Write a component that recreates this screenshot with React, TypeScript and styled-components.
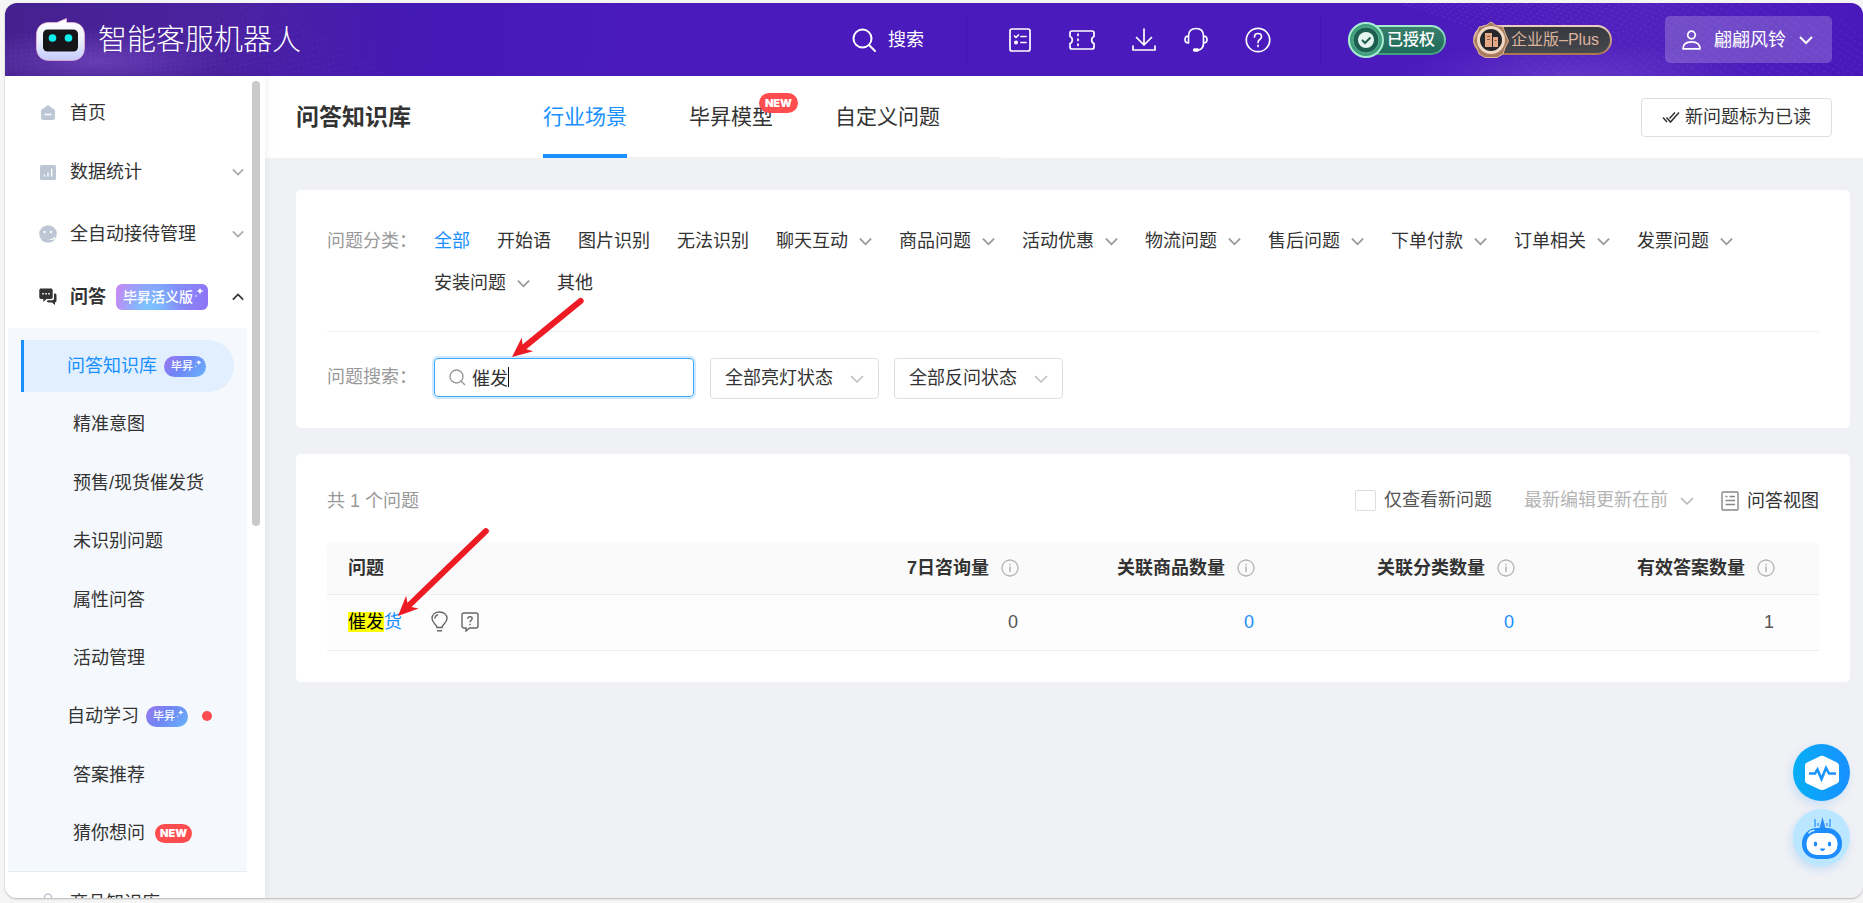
import React, { useState } from 'react';
import styled, { createGlobalStyle, css } from 'styled-components';

const GlobalStyle = createGlobalStyle`
  *, *::before, *::after { box-sizing: border-box; }
  body {
    margin: 0;
    background: #f5f5f5;
    color: #333;
    font-family: "Liberation Sans", "Noto Sans CJK SC", sans-serif;
    font-size: 18px;
    line-height: 26px;
    font-weight: 400;
  }
  button, input, select { font: inherit; color: inherit; margin: 0; }
  button { background: none; border: 0; padding: 0; cursor: pointer; }
  a { color: inherit; text-decoration: none; }
  ul { list-style: none; margin: 0; padding: 0; }
  h1 { margin: 0; }
  svg { display: block; flex: none; }
`;

/* ---------- frame ---------- */

const Frame = styled.div`
  display: flex;
  flex-direction: column;
  height: calc(100vh - 8px);
  margin: 3px 0 5px 5px;
  border-radius: 12px;
  overflow: hidden;
  background: #f0f1f5;
  box-shadow: 0 1px 2px rgba(0, 0, 0, 0.25);
`;

const Body = styled.div`
  display: flex;
  flex: 1;
  min-height: 0;
`;

/* ---------- top bar ---------- */

const TopBar = styled.header`
  position: relative;
  display: flex;
  align-items: center;
  flex: none;
  height: 73px;
  padding: 0 31px;
  color: #fff;
  background: linear-gradient(97deg, #45218f 0%, #4a22a0 12%, #4419b4 22%, #4a1abd 34%, #4a1abd 76%, #5122bd 88%, #4a17bb 100%);
`;

const Waves = styled.svg`
  position: absolute;
  inset: 0;
  width: 100%;
  height: 100%;
`;

const Brand = styled.a`
  position: relative;
  display: flex;
  align-items: center;
  gap: 13px;
  font-size: 29px;
  line-height: 40px;
  font-weight: 300;
  flex: 1;
`;

const TopTools = styled.div`
  position: relative;
  display: flex;
  align-items: center;
`;

const SearchButton = styled.button`
  display: flex;
  align-items: center;
  gap: 12px;
  padding-right: 42px;
`;

const ToolSet = styled.div`
  display: flex;
  align-items: center;
  gap: 36px;
  height: 52px;
  padding: 0 49px 0 40px;
  border: solid rgba(40, 10, 130, 0.25);
  border-width: 0 1px;
`;

const ToolPair = styled.div`
  display: flex;
  gap: 26px;
`;

const ToolButton = styled.button`
  display: flex;
  align-items: center;
  justify-content: center;
  width: 26px;
`;

const Medal = styled.a<{ $kind: 'auth' | 'plan' }>`
  position: relative;
  display: flex;
  align-items: center;
  height: 30px;
  margin-left: 27px;
  font-size: 16px;
  line-height: 22px;
  border-radius: 15px;
  border: 2px solid transparent;
  white-space: nowrap;
  ${({ $kind }) =>
    $kind === 'auth'
      ? css`
          width: 98px;
          padding-left: 37px;
          font-weight: 500;
          background: linear-gradient(#3a7f6c, #1f6a5c) padding-box, linear-gradient(#a5ecd0, #3f9c7c) border-box;
        `
      : css`
          width: 139px;
          padding-left: 36px;
          color: #dcb49c;
          background: linear-gradient(#38383f, #47474e) padding-box, linear-gradient(#ecd0c0, #a87350) border-box;
        `}
`;

const MedalIcon = styled.svg`
  position: absolute;
  left: -2px;
  top: -6px;
`;

const UserButton = styled.button`
  display: flex;
  align-items: center;
  gap: 13px;
  height: 47px;
  margin-left: 53px;
  padding: 0 19px 0 17px;
  border-radius: 5px;
  background: rgba(255, 255, 255, 0.2);
`;

/* ---------- side bar ---------- */

const Side = styled.aside`
  position: relative;
  z-index: 1;
  flex: none;
  width: 260px;
  overflow: hidden;
  background: #fff;
  box-shadow: 0 0 10px rgba(0, 0, 0, 0.08);
`;

const ScrollThumb = styled.div`
  position: absolute;
  top: 5px;
  right: 5px;
  width: 8px;
  height: 445px;
  border-radius: 4px;
  background: #c9c9c9;
`;

const MenuList = styled.ul`
  padding: 8px 18px 0 3px;
`;

const MenuLink = styled.a<{ $short?: boolean; $open?: boolean }>`
  display: flex;
  align-items: center;
  height: ${({ $short, $open }) => ($short ? 57 : $open ? 63 : 62)}px;
  padding: 0 3px 0 31px;
  font-weight: ${({ $open }) => ($open ? 700 : 400)};
  color: #333;
`;

const MenuIcon = styled.span`
  display: flex;
  justify-content: center;
  width: 18px;
  margin-right: 13px;
`;

const Grow = styled.span`
  flex: 1;
`;

const EditionBadge = styled.span`
  position: relative;
  height: 26px;
  margin-left: 10px;
  padding: 0 15px 0 7px;
  border-radius: 6px;
  color: #fff;
  font-size: 14px;
  line-height: 26px;
  font-weight: 500;
  background: radial-gradient(circle at 35% 90%, #7cc6ff 0%, rgba(124, 198, 255, 0) 50%),
    linear-gradient(100deg, #c58df5 0%, #7f9bfb 50%, #8f73f6 100%);
`;

const ModelBadge = styled.span`
  position: relative;
  width: 42px;
  height: 21px;
  margin-left: 7px;
  padding-left: 7px;
  border-radius: 11px;
  color: #fff;
  font-size: 11px;
  line-height: 21px;
  font-weight: 500;
  background: linear-gradient(130deg, #9f76ee 0%, #6f86f5 45%, #68b4fb 100%);
`;

const Spark = styled.svg`
  position: absolute;
  top: 4px;
  right: 4px;
`;

const NewBadge = styled.span<{ $over?: boolean }>`
  height: ${({ $over }) => ($over ? 20 : 19)}px;
  padding: 0 ${({ $over }) => ($over ? 6 : 5)}px;
  border-radius: 10px;
  color: #fff;
  background: #ff4d4f;
  font-family: Inter, sans-serif;
  font-size: 11px;
  line-height: ${({ $over }) => ($over ? 20 : 19)}px;
  font-weight: 900;
  ${({ $over }) =>
    $over
      ? css`
          position: absolute;
          top: 17px;
          right: -25px;
        `
      : css`
          margin-left: 10px;
        `}
`;

const Dot = styled.span`
  width: 10px;
  height: 10px;
  margin-left: 14px;
  border-radius: 50%;
  background: #ff4d4f;
`;

const SubMenu = styled.ul`
  display: flex;
  flex-direction: column;
  justify-content: space-between;
  height: 544px;
  padding: 12px 13px;
  background: #f5f9fd;
  border-bottom: 1px solid #e3edf6;
`;

const SubLink = styled.a<{ $active?: boolean; $badged?: boolean }>`
  display: flex;
  align-items: center;
  height: 52px;
  padding-left: ${({ $badged }) => ($badged ? 43 : 49)}px;
  border-left: 3px solid transparent;
  ${({ $active }) =>
    $active &&
    css`
      color: #1890ff;
      border-left-color: #1890ff;
      border-radius: 0 26px 26px 0;
      background: #e1effe;
    `}
`;

/* ---------- main ---------- */

const Main = styled.main`
  position: relative;
  flex: 1;
  min-width: 0;
`;

const PageHead = styled.div`
  display: flex;
  align-items: center;
  height: 82px;
  padding: 0 31px;
  background: #fff;
`;

const Title = styled.h1`
  width: 247px;
  font-size: 23px;
  line-height: 32px;
  font-weight: 700;
`;

const Tabs = styled.nav`
  display: flex;
  align-self: stretch;
  gap: 62px;
  padding-right: 61px;
  border-bottom: 1px solid #f0f0f2;
`;

const Tab = styled.a<{ $active?: boolean }>`
  position: relative;
  margin-bottom: -1px;
  font-size: 21px;
  line-height: 82px;
  ${({ $active }) =>
    $active &&
    css`
      color: #1890ff;
      box-shadow: inset 0 -4px #1890ff;
    `}
`;

const OutlineButton = styled.button`
  display: flex;
  align-items: center;
  gap: 5px;
  height: 39px;
  margin-left: auto;
  padding: 0 20px;
  border: 1px solid #dcdee0;
  border-radius: 4px;
`;

const Content = styled.div`
  display: flex;
  flex-direction: column;
  gap: 26px;
  padding: 32px 13px 0 31px;
`;

const Card = styled.section<{ $top: number; $bottom: number }>`
  position: relative;
  padding: ${({ $top, $bottom }) => `${$top}px 31px ${$bottom}px`};
  border-radius: 5px;
  background: #fff;
`;

const FilterRow = styled.div<{ $divided?: boolean }>`
  display: flex;
  align-items: flex-start;
  ${({ $divided }) =>
    $divided &&
    css`
      padding-bottom: 27px;
      border-bottom: 1px solid #f0f2f4;
      margin-bottom: 26px;
    `}
`;

const FilterLabel = styled.label<{ $line: number }>`
  flex: none;
  width: 107px;
  line-height: ${({ $line }) => $line}px;
  color: #999;
`;

const Categories = styled.ul`
  display: flex;
  flex-wrap: wrap;
  column-gap: 27px;
`;

const Category = styled.button<{ $active?: boolean }>`
  display: flex;
  align-items: center;
  gap: 11px;
  height: 42px;
  color: ${({ $active }) => ($active ? '#1890ff' : '#333')};
`;

const SearchField = styled.div`
  position: relative;
  display: flex;
  align-items: center;
  gap: 6px;
  width: 260px;
  height: 39px;
  margin-right: 16px;
  padding-left: 14px;
  border: 1px solid #40a9ff;
  border-radius: 4px;
  box-shadow: 0 0 0 2px rgba(24, 144, 255, 0.2);
`;

const SearchInput = styled.input`
  flex: 1;
  min-width: 0;
  height: 100%;
  padding: 0 0 2px;
  border: 0;
  outline: 0;
  background: none;
`;

const Caret = styled.span`
  position: absolute;
  top: 8px;
  left: 73px;
  width: 1px;
  height: 20px;
  background: #111;
`;

const SelectBox = styled.span<{ $plain?: boolean }>`
  position: relative;
  display: inline-flex;
  align-items: center;
  width: ${({ $plain }) => ($plain ? 171 : 169)}px;
  color: ${({ $plain }) => ($plain ? '#b5b5b5' : '#333')};
  ${({ $plain }) =>
    !$plain &&
    css`
      height: 41px;
      margin-right: 15px;
      border: 1px solid #dcdee0;
      border-radius: 4px;
    `}

  select {
    appearance: none;
    width: 100%;
    height: 100%;
    padding: ${({ $plain }) => ($plain ? '0 0 2px' : '0 14px 2px')};
    border: 0;
    outline: 0;
    background: none;
  }

  svg {
    position: absolute;
    right: ${({ $plain }) => ($plain ? 1 : 14)}px;
    pointer-events: none;
  }
`;

const TableTools = styled.div`
  display: flex;
  align-items: center;
  height: 42px;
  margin-bottom: 20px;
`;

const Total = styled.span`
  flex: 1;
  color: #999;
`;

const CheckLabel = styled.label`
  display: flex;
  align-items: center;
  gap: 8px;
  margin-right: 32px;
  padding-bottom: 2px;
  color: #555;

  input {
    appearance: none;
    width: 21px;
    height: 21px;
    border: 1px solid #dcdee0;
    border-radius: 2px;
    background: #fff;
  }
`;

const ViewButton = styled.button`
  display: flex;
  align-items: center;
  gap: 8px;
  margin-left: 26px;
`;

const Table = styled.table`
  width: 100%;
  table-layout: fixed;
  border-collapse: separate;
  border-spacing: 0;
`;

const Th = styled.th<{ $width?: number; $last?: boolean }>`
  width: ${({ $width }) => ($width ? `${$width}px` : 'auto')};
  height: 53px;
  padding: 0 ${({ $last }) => ($last ? 44 : 21)}px 0 21px;
  text-align: left;
  font-weight: 700;
  background: #fafafa;
  border-bottom: 1px solid #ebedef;
  &:first-child { border-top-left-radius: 5px; }
  &:last-child { border-top-right-radius: 5px; }
`;

const HeadCell = styled.span`
  display: flex;
  align-items: center;
  justify-content: flex-end;
  gap: 12px;
  white-space: nowrap;
`;

const Td = styled.td<{ $num?: boolean; $last?: boolean }>`
  height: 56px;
  padding: 0 ${({ $last }) => ($last ? 45 : 22)}px 2px 21px;
  text-align: ${({ $num }) => ($num ? 'right' : 'left')};
  color: #555;
  background: #fdfdfd;
  border-bottom: 1px solid #ebedef;
`;

const Link = styled.a`
  color: #1890ff;
`;

const QuestionCell = styled.div`
  display: flex;
  align-items: center;

  mark {
    display: inline-block;
    line-height: 20px;
    background: #ff0;
    color: #000;
  }
  button { margin-left: 13px; }
  a + button { margin-left: 29px; }
`;

const FloatButtons = styled.div`
  position: absolute;
  right: 13px;
  bottom: 32px;
  display: flex;
  flex-direction: column;
  gap: 8px;
`;

const FloatButton = styled.button<{ $soft?: boolean }>`
  display: flex;
  align-items: center;
  justify-content: center;
  width: 57px;
  height: 57px;
  border-radius: 50%;
  background: ${({ $soft }) => ($soft ? '#bae7ff' : 'linear-gradient(90deg, #06aef5, #1890ff)')};
  box-shadow: -2px 4px 10px rgba(24, 144, 255, 0.18);
`;

const Pointer = styled.svg<{ $left: number; $top: number }>`
  position: absolute;
  left: ${({ $left }) => $left}px;
  top: ${({ $top }) => $top}px;
  pointer-events: none;
`;

/* ---------- drawings ---------- */

const Chevron = ({ size = 14, color = '#aaa', up = false, weight = 2 }: { size?: number; color?: string; up?: boolean; weight?: number }) => (
  <svg width={size} height={size} viewBox="0 0 14 14" fill="none" stroke={color} strokeWidth={weight}>
    <path d={up ? 'M1 10l6-6 6 6' : 'M1 4l6 6 6-6'} />
  </svg>
);

const InfoIcon = () => (
  <svg width="18" height="18" viewBox="0 0 18 18" fill="none" stroke="#b3b3b3" strokeWidth="1.3">
    <circle cx="9" cy="9" r="8" />
    <path d="M9 7.6v5.4M9 4.8v1.4" strokeWidth="1.5" />
  </svg>
);

const SparkIcon = ({ size = 10 }: { size?: number }) => (
  <Spark width={size} height={size} viewBox="0 0 10 10" fill="#fff">
    <path d="M6 0l1 2 2.500 1L7 4 6 6.500 5 4 2.500 3 5 2z" />
    <circle cx="2" cy="8" r="1" opacity=".6" />
  </Spark>
);

const LogoIcon = () => (
  <svg width="49" height="43" viewBox="0 0 49 43">
    <defs>
      <linearGradient id="logo" x1="0" y1="0" x2="0" y2="1">
        <stop offset="0" stopColor="#fff" />
        <stop offset=".5" stopColor="#eef0ff" />
        <stop offset="1" stopColor="#c3cbff" />
      </linearGradient>
    </defs>
    <path d="M13 4.500h8L30.500.5v4H36c8 0 12.500 5 12.500 12.500V29c0 9-5 13.500-13 13.500h-22C5.500 42.500.5 38 .5 29V17C.5 9.500 5 4.500 13 4.500z" fill="url(#logo)" stroke="#f3b9cf" strokeWidth=".7" />
    <rect x="7" y="11.500" width="35" height="22" rx="4.500" fill="#161619" />
    <circle cx="16.500" cy="20" r="3.800" fill="#0ff0f0" />
    <circle cx="32.500" cy="20" r="3.800" fill="#0ff0f0" />
  </svg>
);

const range = (n: number) => Array.from({ length: n }, (_, i) => i);

const HeaderWaves = () => (
  <Waves aria-hidden="true">
    <defs>
      <radialGradient id="glow">
        <stop offset="0" stopColor="#9a6ae0" stopOpacity=".38" />
        <stop offset="1" stopColor="#9a6ae0" stopOpacity="0" />
      </radialGradient>
    </defs>
    <ellipse cx="90" cy="58" rx="130" ry="32" fill="url(#glow)" />
    <g fill="none" stroke="#a884ee" strokeOpacity=".13" strokeDasharray="2 3">
      {range(16).map((i) => (
        <path key={i} d={`M0 ${34 + i * 5}C90 ${20 + i * 5} 150 ${56 + i * 4} ${260 + i * 8} ${-6 + i * 5}`} />
      ))}
    </g>
    <svg x="75%" width="480" height="73">
      <ellipse cx="170" cy="73" rx="170" ry="34" fill="url(#glow)" opacity=".7" />
      <g fill="none" stroke="#a884ee" strokeOpacity=".18" strokeDasharray="3 3">
        {range(34).map((i) => (
          <path key={i} d={`M${-80 + i * 15} -8C${60 + i * 12} ${-2 + i} ${100 + i * 11} 40 ${150 + i * 12} 82`} />
        ))}
      </g>
    </svg>
  </Waves>
);

const line = { fill: 'none', stroke: '#fff', strokeWidth: 1.7, strokeLinecap: 'round', strokeLinejoin: 'round' } as const;

const TaskTool = () => (
  <ToolButton aria-label="任务清单">
    <svg width="24" height="26" viewBox="0 0 24 26" {...line}>
      <rect x="2" y="2" width="20" height="22" rx="2" />
      <path d="M6.500 9l1.500 1.500L10.500 8M13 9.500h5M13 15.500h5" />
      <circle cx="8" cy="15.500" r="1.200" />
    </svg>
  </ToolButton>
);

const TicketTool = () => (
  <ToolButton aria-label="卡券">
    <svg width="26" height="22" viewBox="0 0 26 22" {...line}>
      <path d="M3 2h20c1 0 2 1 2 2v3.500c-1.500.5-2.300 2-2.300 3.500s.8 3 2.300 3.500V18c0 1-1 2-2 2H3c-1 0-2-1-2-2v-3.500c1.500-.5 2.300-2 2.300-3.500S2.500 8 1 7.500V4c0-1 1-2 2-2z" />
      <path d="M9 5v13" strokeDasharray="1.500 3.500" />
    </svg>
  </ToolButton>
);

const DownloadTool = () => (
  <ToolButton aria-label="下载">
    <svg width="24" height="25" viewBox="0 0 24 25" {...line}>
      <path d="M12 2v16M4.500 10.500L12 18l7.500-7.500M1 19v4h22v-4" />
    </svg>
  </ToolButton>
);

const HeadsetTool = () => (
  <ToolButton aria-label="客服">
    <svg width="24" height="25" viewBox="0 0 24 25" {...line}>
      <path d="M4.500 9c0-5 3-7.500 7.500-7.500S19.500 4 19.500 9M4.500 9v7C2 16 1 15 1 12.500S2 9 4.500 9zM19.500 9v7c2.500 0 3.500-1 3.500-3.500S22 9 19.500 9zM19.500 16c0 4-2 6.500-5 7" />
      <path d="M10.500 23h3" strokeWidth="3.400" />
    </svg>
  </ToolButton>
);

const HelpTool = () => (
  <ToolButton aria-label="帮助">
    <svg width="26" height="26" viewBox="0 0 26 26" {...line}>
      <circle cx="13" cy="13" r="11.700" />
      <path d="M9.500 10c0-2.200 1.500-3.500 3.500-3.500s3.500 1.300 3.500 3.200c0 2.600-3.500 2.800-3.500 5.800M13 18.300v1.200" />
    </svg>
  </ToolButton>
);

const grey = '#bcc6d4';

const icons = {
  home: (
    <svg width="14" height="15" viewBox="0 0 14 15">
      <path d="M7 .5l6.500 4.700V13c0 1-.7 1.500-1.500 1.500H2C1.200 14.500.5 14 .5 13V5.200z" fill={grey} stroke={grey} strokeLinejoin="round" />
      <path d="M3.500 9.500h7" stroke="#fff" strokeWidth="1.500" />
    </svg>
  ),
  chart: (
    <svg width="16" height="15" viewBox="0 0 16 15">
      <rect width="16" height="15" rx="1.500" fill={grey} />
      <path d="M4.500 11.500v-2M8 11.500v-4M11.700 11.500v-8" stroke="#fff" strokeWidth="1.300" />
    </svg>
  ),
  face: (
    <svg width="18" height="18" viewBox="0 0 18 18">
      <circle cx="9" cy="9" r="8.800" fill={grey} />
      <circle cx="5.500" cy="7" r="1.200" fill="#fff" />
      <circle cx="12" cy="7" r="1.200" fill="#fff" />
      <path d="M9 14c3 1 5-.5 7-2.500v2c-2 1.500-4 2.500-7 .5z" fill="#fff" />
    </svg>
  ),
  chat: (
    <svg width="18" height="17" viewBox="0 0 18 17" fill="#333">
      <path d="M2 .5h10c1 0 1.700.7 1.700 1.700v7c0 1-.7 1.700-1.700 1.700H7.500L4.300 14v-3.100H2C1 10.900.3 10.200.3 9.200v-7C.3 1.200 1 .5 2 .5z" />
      <path d="M15 5.500h.8c1 0 1.700.7 1.700 1.700v5.500c0 1-.7 1.700-1.500 1.700V17l-3-2.600H9.500C8.500 14.400 8 14 7.800 13.300l1-1H13c1.300 0 2-1 2-2z" />
      <path d="M3.200 5.700h1.600M6.200 5.700h1.600M9.200 5.700h1.600" stroke="#fff" strokeWidth="1.600" />
    </svg>
  ),
  bag: (
    <svg width="16" height="20" viewBox="0 0 16 20" fill={grey}>
      <path d="M4.500 7V4.500a3.500 3.500 0 0 1 7 0V7" fill="none" stroke={grey} strokeWidth="1.500" />
      <rect x="1" y="7" width="14" height="11" rx="2" />
    </svg>
  ),
};

const Arrow = ({ left, top, width, height }: { left: number; top: number; width: number; height: number }) => {
  const x = width - 4;
  const length = Math.hypot(x, height - 4);
  const angle = (Math.atan2(4 - height, x) * 180) / Math.PI;
  return (
    <Pointer $left={left} $top={top} width={width} height={height} overflow="visible" aria-hidden="true">
      <g transform={`translate(0 ${height}) rotate(${angle})`} fill="#ed1c24">
        <path d={`M0 0L20-9 16-3H${length - 3}a3 3 0 0 1 0 6H16L20 9z`} />
      </g>
    </Pointer>
  );
};

/* ---------- data ---------- */

const subItems: { label: string; active?: boolean; model?: boolean; dot?: boolean; fresh?: boolean }[] = [
  { label: '问答知识库', active: true, model: true },
  { label: '精准意图' },
  { label: '预售/现货催发货' },
  { label: '未识别问题' },
  { label: '属性问答' },
  { label: '活动管理' },
  { label: '自动学习', model: true, dot: true },
  { label: '答案推荐' },
  { label: '猜你想问', fresh: true },
];

const plainCategories = ['全部', '开始语', '图片识别', '无法识别'];
const nestedCategories = ['聊天互动', '商品问题', '活动优惠', '物流问题', '售后问题', '下单付款', '订单相关', '发票问题', '安装问题'];

const columns = [
  { label: '7日咨询量', width: 236 },
  { label: '关联商品数量', width: 236 },
  { label: '关联分类数量', width: 260 },
  { label: '有效答案数量', width: 283, last: true },
];

export default function App() {
  const [query, setQuery] = useState('催发');

  return (
    <>
      <GlobalStyle />
      <Frame>
        <TopBar>
          <HeaderWaves />
          <Brand href="#home">
            <LogoIcon />
            智能客服机器人
          </Brand>
          <TopTools>
            <SearchButton>
              <svg width="24" height="24" viewBox="0 0 24 24" {...line} strokeWidth="2">
                <circle cx="10.500" cy="10.500" r="9" />
                <path d="M17 17l6 6" />
              </svg>
              搜索
            </SearchButton>
            <ToolSet>
              <TaskTool />
              <TicketTool />
              <ToolPair>
                <DownloadTool />
                <HeadsetTool />
              </ToolPair>
              <HelpTool />
            </ToolSet>
            <Medal href="#license" $kind="auth">
              <MedalIcon width="36" height="38" viewBox="0 0 36 38">
                <circle cx="18" cy="19" r="17" fill="#3f9c7c" stroke="#a5ecd0" strokeWidth="2" />
                <circle cx="18" cy="19" r="13" fill="#1d5e50" stroke="#57b594" />
                <circle cx="18" cy="19" r="8" fill="#e6f5ef" />
                <path d="M14 19l3 3 5.500-5.500" fill="none" stroke="#1d5e50" strokeWidth="2" />
              </MedalIcon>
              已授权
            </Medal>
            <Medal href="#plan" $kind="plan">
              <MedalIcon width="36" height="38" viewBox="0 0 36 38">
                <path d="M18 1l5 3.500 7 1.500 2 6 3.500 8-3.500 7-2 6-6 3.500H12L6 33l-2-6-3.500-7L4 12l2-6 7-1.500z" fill="#a87b5e" stroke="#dcb898" strokeLinejoin="round" />
                <circle cx="18" cy="19" r="12.500" fill="#26262b" stroke="#f0d8c4" strokeWidth="3" />
                <path d="M12 12h7v14h-7zM20 16h5v10h-5z" fill="#e2a888" />
                <path d="M14 15.500h3M14 18.500h3M21.500 19.500h2" stroke="#8a5a40" />
              </MedalIcon>
              企业版–Plus
            </Medal>
            <UserButton>
              <svg width="19" height="20" viewBox="0 0 19 20" {...line}>
                <circle cx="9.500" cy="5" r="3.800" />
                <path d="M1 18.800c0-4 2.500-7 8.500-7s8.500 3 8.500 7z" />
              </svg>
              翩翩风铃
              <Chevron color="#fff" />
            </UserButton>
          </TopTools>
        </TopBar>

        <Body>
          <Side>
            <MenuList>
              <li>
                <MenuLink href="#home" $short>
                  <MenuIcon>{icons.home}</MenuIcon>首页
                </MenuLink>
              </li>
              <li>
                <MenuLink href="#stats">
                  <MenuIcon>{icons.chart}</MenuIcon>数据统计<Grow />
                  <Chevron size={12} />
                </MenuLink>
              </li>
              <li>
                <MenuLink href="#auto">
                  <MenuIcon>{icons.face}</MenuIcon>全自动接待管理<Grow />
                  <Chevron size={12} />
                </MenuLink>
              </li>
              <li>
                <MenuLink href="#qa" $open>
                  <MenuIcon>{icons.chat}</MenuIcon>问答
                  <EditionBadge>
                    毕昇活义版
                    <SparkIcon />
                  </EditionBadge>
                  <Grow />
                  <Chevron size={12} up color="#333" />
                </MenuLink>
                <SubMenu>
                  {subItems.map((s) => (
                    <li key={s.label}>
                      <SubLink href="#item" $active={s.active} $badged={s.model}>
                        {s.label}
                        {s.model && (
                          <ModelBadge>
                            毕昇
                            <SparkIcon size={8} />
                          </ModelBadge>
                        )}
                        {s.dot && <Dot />}
                        {s.fresh && <NewBadge>NEW</NewBadge>}
                      </SubLink>
                    </li>
                  ))}
                </SubMenu>
              </li>
              <li>
                <MenuLink href="#goods">
                  <MenuIcon>{icons.bag}</MenuIcon>商品知识库
                </MenuLink>
              </li>
            </MenuList>
            <ScrollThumb />
          </Side>

          <Main>
            <PageHead>
              <Title>问答知识库</Title>
              <Tabs>
                <Tab href="#scene" $active>
                  行业场景
                </Tab>
                <Tab href="#model">
                  毕昇模型<NewBadge $over>NEW</NewBadge>
                </Tab>
                <Tab href="#custom">自定义问题</Tab>
              </Tabs>
              <OutlineButton>
                <svg width="18" height="13" viewBox="0 0 18 13" fill="none" stroke="#333" strokeWidth="1.500">
                  <path d="M1 6.500l4 4.500M4.500 6.500l4 4.500 8.500-9.500M7.500 7.500L13 1.500" />
                </svg>
                新问题标为已读
              </OutlineButton>
            </PageHead>

            <Content>
              <Card $top={30} $bottom={29}>
                <FilterRow $divided>
                  <FilterLabel as="span" $line={42}>
                    问题分类：
                  </FilterLabel>
                  <Categories>
                    {plainCategories.map((c, i) => (
                      <li key={c}>
                        <Category $active={i === 0}>{c}</Category>
                      </li>
                    ))}
                    {nestedCategories.map((c) => (
                      <li key={c}>
                        <Category>
                          {c}
                          <Chevron size={13} color="#999" />
                        </Category>
                      </li>
                    ))}
                    <li>
                      <Category>其他</Category>
                    </li>
                  </Categories>
                </FilterRow>
                <FilterRow>
                  <FilterLabel htmlFor="query" $line={38}>
                    问题搜索：
                  </FilterLabel>
                  <SearchField>
                    <svg width="17" height="17" viewBox="0 0 17 17" fill="none" stroke="#999" strokeWidth="1.400">
                      <circle cx="7.500" cy="7.500" r="6.500" />
                      <path d="M12 12l4 4" />
                    </svg>
                    <SearchInput id="query" value={query} onChange={(e) => setQuery(e.target.value)} />
                    <Caret />
                  </SearchField>
                  <SelectBox>
                    <select aria-label="亮灯状态">
                      <option>全部亮灯状态</option>
                    </select>
                    <Chevron color="#bbb" weight={1.5} />
                  </SelectBox>
                  <SelectBox>
                    <select aria-label="反问状态">
                      <option>全部反问状态</option>
                    </select>
                    <Chevron color="#bbb" weight={1.5} />
                  </SelectBox>
                </FilterRow>
                <Arrow left={216} top={105} width={75} height={62} />
              </Card>

              <Card $top={26} $bottom={31}>
                <TableTools>
                  <Total>共 1 个问题</Total>
                  <CheckLabel>
                    <input type="checkbox" />
                    仅查看新问题
                  </CheckLabel>
                  <SelectBox $plain>
                    <select aria-label="排序">
                      <option>最新编辑更新在前</option>
                    </select>
                    <Chevron color="#b5b5b5" weight={1.5} />
                  </SelectBox>
                  <ViewButton>
                    <svg width="18" height="20" viewBox="0 0 18 20" fill="none" stroke="#888" strokeWidth="1.400">
                      <rect x="1" y="1" width="16" height="18" rx="1" />
                      <path d="M8.500 5.500H14M4.500 9.500H14M4.500 13.500H14M4.500 5.500h2" />
                    </svg>
                    问答视图
                  </ViewButton>
                </TableTools>
                <Table>
                  <thead>
                    <tr>
                      <Th>问题</Th>
                      {columns.map((c) => (
                        <Th key={c.label} $width={c.width} $last={c.last}>
                          <HeadCell>
                            {c.label}
                            <InfoIcon />
                          </HeadCell>
                        </Th>
                      ))}
                    </tr>
                  </thead>
                  <tbody>
                    <tr>
                      <Td>
                        <QuestionCell>
                          <Link href="#question">
                            <mark>催发</mark>货
                          </Link>
                          <button aria-label="亮灯">
                            <svg width="17" height="21" viewBox="0 0 17 21" fill="none" stroke="#666" strokeWidth="1.400">
                              <path d="M6 16.500c0-3-5-4.500-5-9C1 3.500 4.200 1 8.500 1S16 3.500 16 7.500c0 4.500-5 6-5 9zM6 19.800h5M4 7.500c0-2 1.200-3.500 3.200-3.800" />
                            </svg>
                          </button>
                          <button aria-label="反问">
                            <svg width="18" height="20" viewBox="0 0 18 20" fill="none" stroke="#666" strokeWidth="1.400">
                              <path d="M3 1h12c1.200 0 2 .8 2 2v11c0 1.200-.8 2-2 2H8.500L5 19v-3H3c-1.200 0-2-.8-2-2V3c0-1.200.8-2 2-2z" />
                              <path d="M6.800 6.800c0-1.300.9-2 2.200-2s2.200.7 2.200 1.800C11.200 8.200 9 8.300 9 10.200M9 11.800v1.400" />
                            </svg>
                          </button>
                        </QuestionCell>
                      </Td>
                      <Td $num>0</Td>
                      <Td $num>
                        <Link href="#goods">0</Link>
                      </Td>
                      <Td $num>
                        <Link href="#category">0</Link>
                      </Td>
                      <Td $num $last>
                        1
                      </Td>
                    </tr>
                  </tbody>
                </Table>
                <Arrow left={102} top={71} width={94} height={91} />
              </Card>
            </Content>

            <FloatButtons>
              <FloatButton aria-label="健康检查">
                <svg width="36" height="36" viewBox="0 0 36 36">
                  <path d="M18 .8c1 0 2 .4 3 1l11.500 5.500c1.500.8 2.500 1.700 2.500 3.500v14.400c0 1.800-1 2.700-2.500 3.500L21 34.200c-2 1-4 1-6 0L3.500 28.700C2 28 1 27 1 25.200V10.800C1 9 2 8 3.500 7.300L15 1.800c1-.6 2-1 3-1z" fill="#fff" />
                  <path d="M5 18.500h6l2.500-4 4 9.500L22 13l3 5.500h7" fill="none" stroke="#1a95ff" strokeWidth="2.600" />
                </svg>
              </FloatButton>
              <FloatButton $soft aria-label="智能助手">
                <svg width="42" height="46" viewBox="0 0 42 46">
                  <path d="M14 4v8M29 4v8M17 8v3M26 8v3" stroke="#3f9fff" strokeWidth="1.500" />
                  <path d="M21.500 2l3 11h-6z" fill="#2a8cf5" />
                  <rect x="1" y="13" width="40" height="31" rx="15" fill="#1c8cff" />
                  <rect x="5.500" y="18" width="31" height="22" rx="10" fill="#fff" />
                  <ellipse cx="14.500" cy="29" rx="1.700" ry="2.500" fill="#1c8cff" />
                  <ellipse cx="28.500" cy="29" rx="1.700" ry="2.500" fill="#1c8cff" />
                  <path d="M19 33.500h5c0 1.500-1 2.500-2.500 2.500s-2.500-1-2.500-2.500z" fill="#1c8cff" />
                  <path d="M8 18c1-1.500 3-2.500 5-2.500" stroke="#d8f0ff" strokeWidth="1.500" fill="none" strokeLinecap="round" />
                </svg>
              </FloatButton>
            </FloatButtons>
          </Main>
        </Body>
      </Frame>
    </>
  );
}
